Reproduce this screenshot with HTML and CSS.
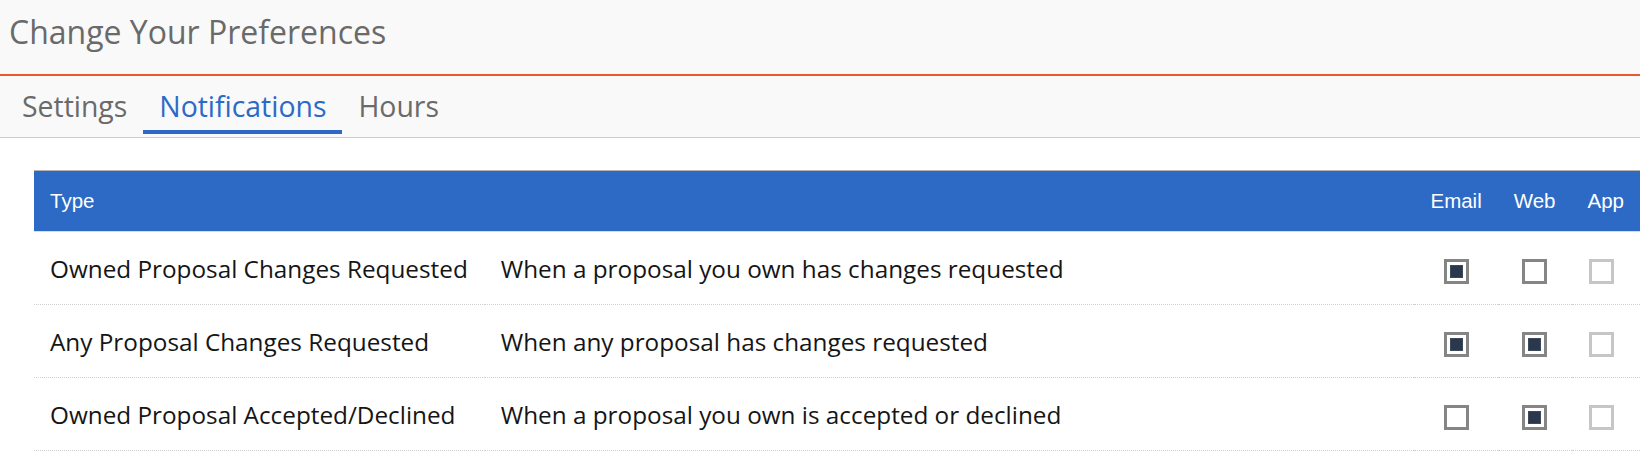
FILE: index.html
```html
<!DOCTYPE html>
<html lang="en">
<head>
<meta charset="utf-8">
<title>Change Your Preferences</title>
<link rel="stylesheet" href="styles.css">
</head>
<body>
<header class="page-header">
  <h1 class="page-title">Change Your Preferences</h1>
</header>
<nav class="tabs">
  <a class="tab">Settings</a>
  <a class="tab active">Notifications</a>
  <a class="tab">Hours</a>
</nav>
<main class="content">
  <table class="prefs">
    <thead>
      <tr>
        <th class="col-type" colspan="2">Type</th>
        <th class="col-check">Email</th>
        <th class="col-check">Web</th>
        <th class="col-check">App</th>
      </tr>
    </thead>
    <tbody>
      <tr>
        <td class="type">Owned Proposal Changes Requested</td>
        <td class="desc">When a proposal you own has changes requested</td>
        <td class="cell-check"><span class="check checked"></span></td>
        <td class="cell-check"><span class="check"></span></td>
        <td class="cell-check"><span class="check disabled"></span></td>
      </tr>
      <tr>
        <td class="type">Any Proposal Changes Requested</td>
        <td class="desc">When any proposal has changes requested</td>
        <td class="cell-check"><span class="check checked"></span></td>
        <td class="cell-check"><span class="check checked"></span></td>
        <td class="cell-check"><span class="check disabled"></span></td>
      </tr>
      <tr>
        <td class="type">Owned Proposal Accepted/Declined</td>
        <td class="desc">When a proposal you own is accepted or declined</td>
        <td class="cell-check"><span class="check"></span></td>
        <td class="cell-check"><span class="check checked"></span></td>
        <td class="cell-check"><span class="check disabled"></span></td>
      </tr>
    </tbody>
  </table>
</main>
</body>
</html>
```

FILE: styles.css
```css
* { box-sizing: border-box; }

html, body {
  margin: 0;
  padding: 0;
  background: #ffffff;
  font-family: "Open Sans", "Liberation Sans", sans-serif;
}

.page-header {
  background: #f9f9f9;
  border-bottom: 2px solid #ee5733;
  height: 76px;
  padding: 12px 0 0 9px;
}

.page-title {
  margin: 0;
  font-size: 32px;
  line-height: 40px;
  font-weight: 400;
  color: #6a6a6a;
}

.tabs {
  display: flex;
  background: #f9f9f9;
  border-bottom: 1px solid #cccccc;
  padding: 12px 0 3px 6px;
}

.tab {
  display: block;
  padding: 0 16px 6px;
  font-size: 28.4px;
  line-height: 36px;
  color: #6a6a6a;
  border-bottom: 4px solid transparent;
}

.tab.active {
  color: #2c6ac6;
  border-bottom-color: #2c6ac6;
}

.content {
  padding: 32px 0 0 34px;
}

.prefs {
  width: 100%;
  border-collapse: collapse;
}

.prefs thead th {
  background: #2c6ac6;
  color: #ffffff;
  font-family: "Liberation Sans", Arial, sans-serif;
  font-weight: 400;
  font-size: 20.5px;
  height: 61px;
  padding: 0 16px;
  border-top: 1px solid #b4b4b4;
  border-bottom: 1px solid #dcdcdc;
  vertical-align: middle;
}

.prefs th.col-type {
  text-align: left;
}

.prefs th.col-check {
  width: 1%;
  white-space: nowrap;
  text-align: center;
}

.prefs tbody td {
  height: 73px;
  padding: 0 16px;
  font-size: 24.3px;
  color: #151515;
  border-bottom: 1px dotted #cfcfcf;
  vertical-align: middle;
  white-space: nowrap;
}

.prefs td.type {
  width: 1%;
  padding-right: 17px;
}

.prefs td.cell-check {
  text-align: center;
}

.prefs td.cell-check:last-child {
  padding-right: 20px;
  padding-left: 12px;
}

.check {
  display: inline-flex;
  align-items: center;
  justify-content: center;
  width: 25px;
  height: 25px;
  border: 3px solid #858585;
  background: #ffffff;
  vertical-align: middle;
}

.check.checked::after {
  content: "";
  display: block;
  width: 11px;
  height: 11px;
  background: #2b384c;
  border: 1px solid #3d4a5e;
}

.check.disabled {
  border-color: #c6c6c6;
}
```
